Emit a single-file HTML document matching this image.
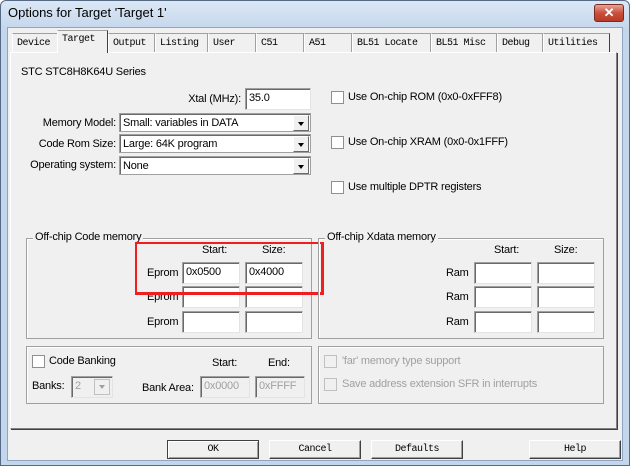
<!DOCTYPE html><html><head><style>
*{box-sizing:border-box;margin:0;padding:0}
body{width:630px;height:466px;overflow:hidden;background:#fff;font-family:"Liberation Sans",Arial,sans-serif;font-size:11px;letter-spacing:-0.2px;color:#000;position:relative}
.a{position:absolute}
.win{left:0;top:0;width:630px;height:466px;background:linear-gradient(#dbe7f5,#c4d6ec 30px,#c4d6ec);border:1px solid #556a84;border-radius:6px 6px 0 0}
.client{left:7px;top:27px;width:616px;height:434px;background:#f0f0f0;border:1px solid #8ea4c0}
.tab{position:absolute;top:33px;height:19px;border:1px solid #a0a0a0;border-bottom:none;background:#f0f0f0;font-family:"Liberation Mono",monospace;font-size:10px;letter-spacing:-0.5px;padding:4px 0 0 4px;white-space:nowrap;border-left-color:#fff}
.tab.sel{top:30px;height:23px;z-index:2;padding-top:3px}
.panel{left:10px;top:52px;width:607px;height:377px;border:1px solid #fff;border-right-color:#808080;border-bottom-color:#808080;box-shadow:1px 1px 0 #404040}
.inp{position:absolute;background:#fff;border:1px solid #a0a0a0;border-right-color:#e3e3e3;border-bottom-color:#e3e3e3;box-shadow:inset 1px 1px 0 #696969;padding:3px 0 0 3px;white-space:nowrap}
.combo{position:absolute;background:#fff;border:1px solid #a0a0a0;box-shadow:inset 1px 1px 0 #696969;padding:3px 0 0 3px;height:19px}
.dd{position:absolute;right:1px;top:1px;width:16px;height:16px;background:#f0f0f0;border:1px solid #fff;border-right-color:#696969;border-bottom-color:#696969}
.dd:after{content:"";position:absolute;left:4px;top:6px;border:3.5px solid transparent;border-top:4px solid #000}
.cb{position:absolute;width:13px;height:13px;background:#fff;border:1px solid #8e8f8f}
.grp{position:absolute;border:1px solid;box-shadow:inset 1px 1px 0 #fff;border-color:#a0a0a0}
.gt{position:absolute;background:#f0f0f0;padding:0 2px}
.btn{position:absolute;top:440px;width:92px;height:19px;background:#f0f0f0;border:1px solid #fff;border-right-color:#404040;border-bottom-color:#404040;box-shadow:inset -1px -1px 0 #a0a0a0;font-family:"Liberation Mono",monospace;font-size:10px;letter-spacing:-0.5px;text-align:center;padding-top:3px}
.r{text-align:right}
.g{color:#a0a0a0}
</style></head><body>
<div class="a win"></div>
<div class="a" style="left:8px;top:5px;font-size:13px;letter-spacing:0">Options for Target 'Target 1'</div>
<div class="a" style="left:594px;top:4px;width:30px;height:18px;border-radius:3px;background:linear-gradient(#e8a496,#c9503c 50%,#b83a26);border:1px solid #7a2a1e;color:#fff;font-weight:bold;text-align:center;font-size:13px;line-height:15px">✕</div>
<div class="a client"></div>
<div class="tab" style="left:12px;width:46px">Device</div>
<div class="tab sel" style="left:57px;width:51px;border-right:1px solid #404040">Target</div>
<div class="tab" style="left:108px;width:47px">Output</div>
<div class="tab" style="left:155px;width:53px">Listing</div>
<div class="tab" style="left:208px;width:48px">User</div>
<div class="tab" style="left:256px;width:48px">C51</div>
<div class="tab" style="left:304px;width:48px">A51</div>
<div class="tab" style="left:352px;width:79px">BL51 Locate</div>
<div class="tab" style="left:431px;width:66px">BL51 Misc</div>
<div class="tab" style="left:497px;width:46px">Debug</div>
<div class="tab" style="left:543px;width:67px;border-right:1px solid #404040">Utilities</div>
<div class="a panel"></div>

<div class="a" style="left:21px;top:66px">STC STC8H8K64U Series</div>
<div class="a r" style="left:140px;top:93px;width:101px">Xtal (MHz):</div>
<div class="inp" style="left:245px;top:88px;width:66px;height:22px">35.0</div>
<div class="a r" style="left:10px;top:117px;width:106px">Memory Model:</div>
<div class="combo" style="left:119px;top:113px;width:192px">Small: variables in DATA<div class="dd"></div></div>
<div class="a r" style="left:10px;top:138px;width:106px">Code Rom Size:</div>
<div class="combo" style="left:119px;top:134px;width:192px">Large: 64K program<div class="dd"></div></div>
<div class="a r" style="left:10px;top:159px;width:106px">Operating system:</div>
<div class="combo" style="left:119px;top:156px;width:192px">None<div class="dd"></div></div>

<div class="cb" style="left:331px;top:91px"></div><div class="a" style="left:348px;top:91px">Use On-chip ROM (0x0-0xFFF8)</div>
<div class="cb" style="left:331px;top:136px"></div><div class="a" style="left:348px;top:136px">Use On-chip XRAM (0x0-0x1FFF)</div>
<div class="cb" style="left:331px;top:181px"></div><div class="a" style="left:348px;top:181px">Use multiple DPTR registers</div>

<div class="grp" style="left:26px;top:238px;width:286px;height:101px"></div>
<div class="gt" style="left:33px;top:231px">Off-chip Code memory</div>
<div class="a" style="left:202px;top:244px">Start:</div><div class="a" style="left:262px;top:244px">Size:</div>
<div class="a" style="left:147px;top:267px">Eprom</div><div class="a" style="left:147px;top:291px">Eprom</div><div class="a" style="left:147px;top:316px">Eprom</div>
<div class="inp" style="left:182px;top:262px;width:58px;height:22px">0x0500</div>
<div class="inp" style="left:245px;top:262px;width:58px;height:22px">0x4000</div>
<div class="inp" style="left:182px;top:286px;width:58px;height:22px"></div>
<div class="inp" style="left:245px;top:286px;width:58px;height:22px"></div>
<div class="inp" style="left:182px;top:311px;width:58px;height:22px"></div>
<div class="inp" style="left:245px;top:311px;width:58px;height:22px"></div>
<div class="a" style="left:135px;top:242px;width:189px;height:53px;border:3px solid #f01e1e;border-left-width:2px;border-top-width:2px"></div>

<div class="grp" style="left:318px;top:238px;width:286px;height:101px"></div>
<div class="gt" style="left:325px;top:231px">Off-chip Xdata memory</div>
<div class="a" style="left:494px;top:244px">Start:</div><div class="a" style="left:554px;top:244px">Size:</div>
<div class="a" style="left:446px;top:267px">Ram</div><div class="a" style="left:446px;top:291px">Ram</div><div class="a" style="left:446px;top:316px">Ram</div>
<div class="inp" style="left:474px;top:262px;width:58px;height:22px"></div>
<div class="inp" style="left:537px;top:262px;width:58px;height:22px"></div>
<div class="inp" style="left:474px;top:286px;width:58px;height:22px"></div>
<div class="inp" style="left:537px;top:286px;width:58px;height:22px"></div>
<div class="inp" style="left:474px;top:311px;width:58px;height:22px"></div>
<div class="inp" style="left:537px;top:311px;width:58px;height:22px"></div>

<div class="grp" style="left:26px;top:346px;width:286px;height:58px"></div>
<div class="cb" style="left:32px;top:355px"></div><div class="a" style="left:49px;top:355px">Code Banking</div>
<div class="a" style="left:212px;top:357px">Start:</div><div class="a" style="left:268px;top:357px">End:</div>
<div class="a" style="left:32px;top:380px">Banks:</div>
<div class="inp g" style="left:71px;top:376px;width:42px;height:22px;background:#f0f0f0">2<div style="position:absolute;right:2px;top:2px;width:16px;height:16px;border:1px solid #c0c0c0"><div style="position:absolute;left:4px;top:5px;border:3.5px solid transparent;border-top:4px solid #a0a0a0"></div></div></div>
<div class="a" style="left:142px;top:382px">Bank Area:</div>
<div class="inp g" style="left:200px;top:376px;width:50px;height:22px;background:#f0f0f0">0x0000</div>
<div class="inp g" style="left:255px;top:376px;width:50px;height:22px;background:#f0f0f0">0xFFFF</div>

<div class="grp" style="left:318px;top:346px;width:286px;height:58px"></div>
<div class="cb" style="left:324px;top:355px;background:#f0f0f0;border-color:#c0c0c0"></div><div class="a g" style="left:342px;top:355px">'far' memory type support</div>
<div class="cb" style="left:324px;top:378px;background:#f0f0f0;border-color:#c0c0c0"></div><div class="a g" style="left:342px;top:378px">Save address extension SFR in interrupts</div>

<div class="btn" style="left:167px;border-color:#404040;box-shadow:inset 1px 1px 0 #fff,inset -1px -1px 0 #a0a0a0">OK</div>
<div class="btn" style="left:269px">Cancel</div>
<div class="btn" style="left:371px">Defaults</div>
<div class="btn" style="left:529px">Help</div>
</body></html>
